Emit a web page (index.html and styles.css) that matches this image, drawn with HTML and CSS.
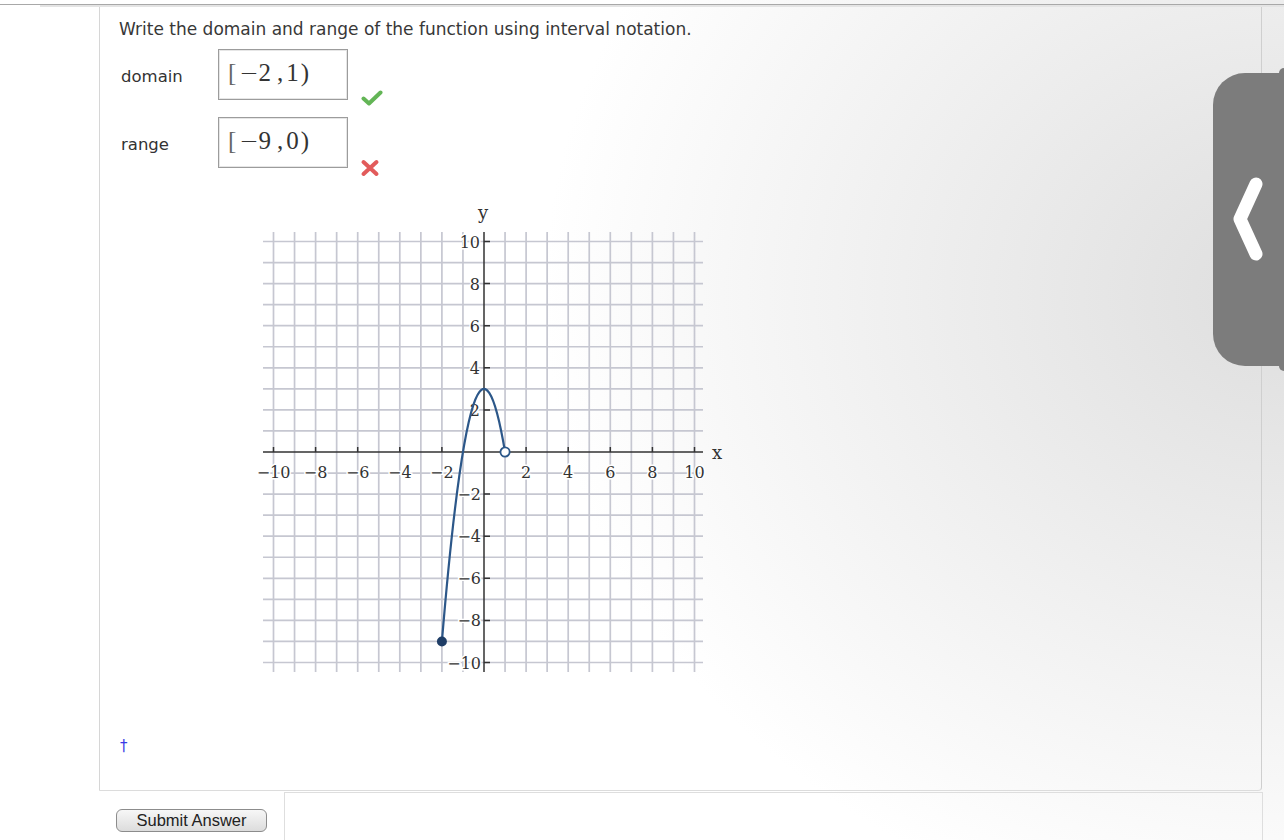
FILE: index.html
```html
<!DOCTYPE html>
<html>
<head>
<meta charset="utf-8">
<link rel="stylesheet" href="styles.css">
</head>
<body>
<div class="topbar"></div>
<div class="ledge"></div>
<div class="panel">
  <p class="question">Write the domain and range of the function using interval notation.</p>
  <div class="answers">
    <div class="row">
      <span class="label">domain</span>
      <div class="field"><span class="math"><span class="br">[</span><span class="mi">−</span><span class="d2">2</span><span class="cm">,</span><span>1</span><span class="pr">)</span></span></div>
      <svg class="mark mark-ok" width="22" height="16" viewBox="0 0 22 16"><path d="M2.5 8.5 L8 13.5 L19.5 2.5" fill="none" stroke="#63b556" stroke-width="4" stroke-linecap="round" stroke-linejoin="round"/></svg>
    </div>
    <div class="row">
      <span class="label">range</span>
      <div class="field"><span class="math"><span class="br">[</span><span class="mi">−</span><span class="d2">9</span><span class="cm">,</span><span>0</span><span class="pr">)</span></span></div>
      <svg class="mark mark-bad" width="20" height="18" viewBox="0 0 20 18"><path d="M3.5 3 L16.5 15 M16.5 3 L3.5 15" fill="none" stroke="#e25b5b" stroke-width="4" stroke-linecap="round"/></svg>
    </div>
  </div>
  <div class="graph">
    <svg width="480" height="480" viewBox="0 0 480 480">
      <g transform="translate(234 252)">
        <path class="grid" d="M-210.5 -220V220M-189.45 -220V220M-168.4 -220V220M-147.35 -220V220M-126.3 -220V220M-105.25 -220V220M-84.2 -220V220M-63.15 -220V220M-42.1 -220V220M-21.05 -220V220M21.05 -220V220M42.1 -220V220M63.15 -220V220M84.2 -220V220M105.25 -220V220M126.3 -220V220M147.35 -220V220M168.4 -220V220M189.45 -220V220M210.5 -220V220M-221 -210.5H219M-221 -189.45H219M-221 -168.4H219M-221 -147.35H219M-221 -126.3H219M-221 -105.25H219M-221 -84.2H219M-221 -63.15H219M-221 -42.1H219M-221 -21.05H219M-221 21.05H219M-221 42.1H219M-221 63.15H219M-221 84.2H219M-221 105.25H219M-221 126.3H219M-221 147.35H219M-221 168.4H219M-221 189.45H219M-221 210.5H219"/>
        <path class="axis" d="M-221 0H219M0 -220V220"/>
        <path class="axis" d="M-210.5 0v-5M-168.4 0v-5M-126.3 0v-5M-84.2 0v-5M-42.1 0v-5M42.1 0v-5M84.2 0v-5M126.3 0v-5M168.4 0v-5M210.5 0v-5M0 -210.5h6M0 -168.4h6M0 -126.3h6M0 -84.2h6M0 -42.1h6M0 42.1h6M0 84.2h6M0 126.3h6M0 168.4h6M0 210.5h6"/>
        <g class="lbl xl">
          <text x="-210.5" y="26">−10</text>
          <text x="-168.4" y="26">−8</text>
          <text x="-126.3" y="26">−6</text>
          <text x="-84.2" y="26">−4</text>
          <text x="-42.1" y="26">−2</text>
          <text x="42.1" y="26">2</text>
          <text x="84.2" y="26">4</text>
          <text x="126.3" y="26">6</text>
          <text x="168.4" y="26">8</text>
          <text x="210.5" y="26">10</text>
        </g>
        <g class="lbl yl">
          <text x="-4" y="-204.5">10</text>
          <text x="-4" y="-162.5">8</text>
          <text x="-4" y="-120.5">6</text>
          <text x="-4" y="-78.5">4</text>
          <text x="-4" y="-36.5">2</text>
          <text x="-3" y="48">−2</text>
          <text x="-3" y="90">−4</text>
          <text x="-3" y="132">−6</text>
          <text x="-3" y="174">−8</text>
          <text x="-3" y="216.5">−10</text>
        </g>
        <text class="axname" x="-1" y="-233">y</text>
        <text class="axname" x="233" y="7">x</text>
        <path class="curve" d="M-42.1 189.45 Q-10.525 -189.45 21.05 0"/>
        <circle cx="-42.1" cy="189.45" r="5" class="dot"/>
        <circle cx="21.05" cy="0" r="4.6" class="hole"/>
      </g>
    </svg>
  </div>
  <div class="dagger">†</div>
</div>
<div class="footer">
  <button class="submit" type="button">Submit Answer</button>
  <div class="footbox"></div>
</div>
<div class="sidetab">
  <svg width="71" height="293" viewBox="0 0 71 293"><path d="M43 111 L27 146 L43 181" fill="none" stroke="#ffffff" stroke-width="13" stroke-linecap="round" stroke-linejoin="round"/></svg>
</div>
</body>
</html>
```

FILE: styles.css
```css
html, body {
  margin: 0;
  padding: 0;
}
body {
  width: 1284px;
  height: 840px;
  overflow: hidden;
  position: relative;
  font-family: "DejaVu Sans", Verdana, sans-serif;
  color: #333;
  background: radial-gradient(ellipse 740px 640px at 100% 35%, #dedede 0%, #ffffff 100%);
}
.topbar {
  height: 4px;
  border-bottom: 1px solid #a8a8a8;
}
.ledge {
  margin-left: 40px;
  height: 2px;
  background: #e4e4e4;
}
.panel {
  box-sizing: border-box;
  margin-left: 99px;
  width: 1163px;
  height: 784px;
  border-left: 1px solid #d6d6d6;
  border-right: 1px solid #cfcfcf;
  border-bottom: 1px solid #dcdcdc;
  border-bottom-right-radius: 4px;
  padding: 12px 0 0 19px;
}
.question {
  margin: 0;
  font-size: 17px;
  line-height: 20px;
  color: #383838;
}
.answers {
  margin-top: 10px;
  display: flex;
  flex-direction: column;
  gap: 17px;
}
.row {
  display: flex;
  align-items: flex-start;
  height: 51px;
}
.label {
  width: 97px;
  margin-left: 2px;
  font-size: 16.5px;
  line-height: 20px;
  padding-top: 18px;
  color: #333;
}
.field {
  box-sizing: border-box;
  width: 130px;
  height: 51px;
  border: 1px solid #9c9c9c;
  box-shadow: inset 0 0 0 1px #e6e6e6;
  padding-left: 9px;
  background: transparent;
}
.math {
  font-family: "Liberation Serif", "Times New Roman", serif;
  font-size: 25px;
  line-height: 46px;
  color: #333;
  white-space: nowrap;
}
.br {
  color: #666;
  margin-right: 3px;
}
.mi {
  font-family: "DejaVu Sans", sans-serif;
  font-size: 23px;
  font-weight: 300;
  margin-right: 0;
}
.d2 {
  margin-right: 6px;
}
.cm {
  margin-right: 3px;
}
.pr {
  margin-left: 2px;
}
.mark {
  display: block;
}
.mark-ok {
  margin-left: 13px;
  margin-top: 41px;
}
.mark-bad {
  margin-left: 12px;
  margin-top: 42px;
}
.graph {
  margin-top: 32px;
  margin-left: 131px;
  width: 480px;
  height: 480px;
}
.graph svg {
  display: block;
}
.grid {
  fill: none;
  stroke: #c6c7d1;
  stroke-width: 1.7;
}
.axis {
  fill: none;
  stroke: #333;
  stroke-width: 1.5;
}
.lbl text {
  font-family: "DejaVu Serif", "Liberation Serif", serif;
  font-size: 16px;
  fill: #333;
  stroke: #ffffff;
  stroke-width: 3px;
  paint-order: stroke;
}
.xl text {
  text-anchor: middle;
}
.yl text {
  text-anchor: end;
}
.axname {
  font-family: "DejaVu Serif", "Liberation Serif", serif;
  font-size: 18px;
  fill: #333;
  text-anchor: middle;
}
.curve {
  fill: none;
  stroke: #2c5789;
  stroke-width: 2.2;
}
.dot {
  fill: #1f3d66;
}
.hole {
  fill: #ffffff;
  stroke: #2c5789;
  stroke-width: 1.8;
}
.dagger {
  margin-top: 56px;
  margin-left: 1px;
  font-family: "DejaVu Sans", sans-serif;
  font-size: 15px;
  line-height: 20px;
  color: #3a3ae6;
}
.footer {
  display: flex;
  align-items: flex-start;
  margin-left: 116px;
}
.submit {
  margin-top: 18px;
  box-sizing: border-box;
  width: 151px;
  height: 23px;
  padding: 0;
  border: 1px solid #8c8c8c;
  border-radius: 6px;
  background: linear-gradient(#f7f7f7, #dcdcdc);
  font-family: "Liberation Sans", Arial, sans-serif;
  font-size: 16.5px;
  line-height: 21px;
  color: #222;
}
.footbox {
  margin-left: 17px;
  margin-top: 1px;
  width: 977px;
  height: 60px;
  border-top: 1px solid #dedede;
  border-left: 1px solid #dedede;
  border-right: 1px solid #dedede;
}
.sidetab {
  position: absolute;
  left: 1213px;
  top: 73px;
  width: 71px;
  height: 293px;
  background: #7c7c7c;
  border-radius: 32px 0 0 32px;
}
.sidetab svg {
  display: block;
}
.sidetab::before,
.sidetab::after {
  content: "";
  position: absolute;
  right: 0;
  width: 5px;
  height: 7px;
  background: #7c7c7c;
}
.sidetab::before {
  top: -5px;
  border-top-left-radius: 5px;
}
.sidetab::after {
  bottom: -5px;
  border-bottom-left-radius: 5px;
}
```
